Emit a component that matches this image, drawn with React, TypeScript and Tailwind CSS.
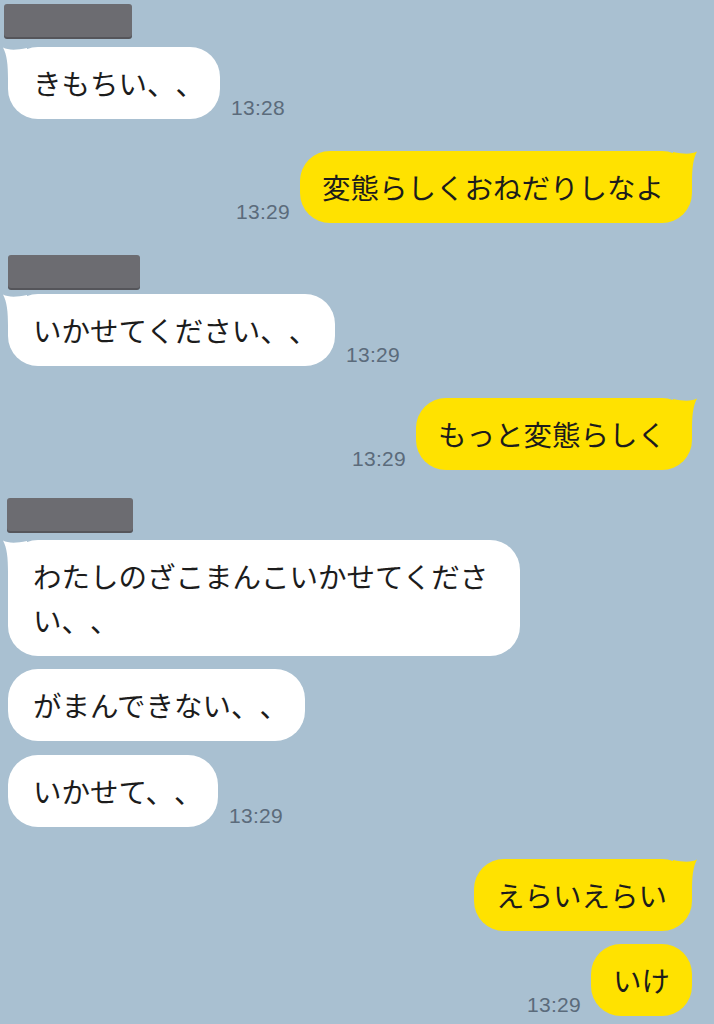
import React from "react";

const jp = { fontFamily: '"Noto Sans CJK JP", "Noto Sans", sans-serif' };
const num = { fontFamily: '"Liberation Sans", Arial, sans-serif' };

function LeftTail() {
  return (
    <svg className="absolute left-[-5px] top-0" width="24" height="32" viewBox="0 0 24 32">
      <path d="M0 0.5 C5 3 12 3.5 24 1 L24 32 L5 32 C5 18 4 8 0 0.5 Z" fill="#ffffff" />
    </svg>
  );
}

function RightTail() {
  return (
    <svg className="absolute right-[-5px] top-0" width="24" height="32" viewBox="0 0 24 32">
      <path d="M24 0.5 C19 3 12 3.5 0 1 L0 32 L19 32 C19 18 20 8 24 0.5 Z" fill="#ffe200" />
    </svg>
  );
}

function Time({ t }: { t: string }) {
  return (
    <span style={num} className="text-[21px] leading-none text-[#5b6b7b] pb-[1px] tracking-[0.3px]">
      {t}
    </span>
  );
}

function LBubble({ text, w, tail, time, wrap }: { text: string; w: string; tail?: boolean; time?: string; wrap?: boolean }) {
  return (
    <div className="flex items-end gap-[11px] pl-[8px]">
      <div
        lang="ja"
        style={jp}
        className={`relative bg-white rounded-[30px] py-[14px] pl-[25px] pr-[20px] text-[28.5px] leading-[44px] text-[#1c1c1c] [text-spacing-trim:space-all] ${w} ${wrap ? "" : "whitespace-nowrap"}`}
      >
        {tail && <LeftTail />}
        <span className="relative">{text}</span>
      </div>
      {time && <Time t={time} />}
    </div>
  );
}

function RBubble({ text, w, tail, time }: { text: string; w: string; tail?: boolean; time?: string }) {
  return (
    <div className="flex items-end justify-end gap-[10px] pr-[22px]">
      {time && <Time t={time} />}
      <div
        lang="ja"
        style={jp}
        className={`relative bg-[#ffe200] rounded-[30px] py-[14px] pl-[22px] text-[28.5px] leading-[44px] text-[#1c1c1c] whitespace-nowrap [text-spacing-trim:space-all] ${w}`}
      >
        {tail && <RightTail />}
        <span className="relative">{text}</span>
      </div>
    </div>
  );
}

function NameBar({ w, ml }: { w: string; ml: string }) {
  return <div className={`h-[33px] rounded-[3px] bg-[#6c6c71] shadow-[0_2px_0_#55555a] ${w} ${ml}`} />;
}

export default function App() {
  return (
    <div className="w-[714px] h-[1024px] bg-[#a9c0d1] overflow-hidden pt-[4px] flex flex-col">
      <NameBar w="w-[128px]" ml="ml-[4px]" />
      <div className="mt-[10px]">
        <LBubble text="きもちい、、" w="w-[212px]" tail time="13:28" />
      </div>
      <div className="mt-[32px]">
        <RBubble text="変態らしくおねだりしなよ" w="w-[392px]" tail time="13:29" />
      </div>
      <div className="mt-[32px]">
        <NameBar w="w-[132px]" ml="ml-[8px]" />
      </div>
      <div className="mt-[6px]">
        <LBubble text="いかせてください、、" w="w-[327px]" tail time="13:29" />
      </div>
      <div className="mt-[32px]">
        <RBubble text="もっと変態らしく" w="w-[276px]" tail time="13:29" />
      </div>
      <div className="mt-[28px]">
        <NameBar w="w-[126px]" ml="ml-[7px]" />
      </div>
      <div className="mt-[9px]">
        <LBubble text="わたしのざこまんこいかせてください、、" w="w-[512px]" tail wrap />
      </div>
      <div className="mt-[13px]">
        <LBubble text="がまんできない、、" w="w-[297px]" />
      </div>
      <div className="mt-[14px]">
        <LBubble text="いかせて、、" w="w-[210px]" time="13:29" />
      </div>
      <div className="mt-[32px]">
        <RBubble text="えらいえらい" w="w-[218px]" tail />
      </div>
      <div className="mt-[13px]">
        <RBubble text="いけ" w="w-[101px]" time="13:29" />
      </div>
    </div>
  );
}
